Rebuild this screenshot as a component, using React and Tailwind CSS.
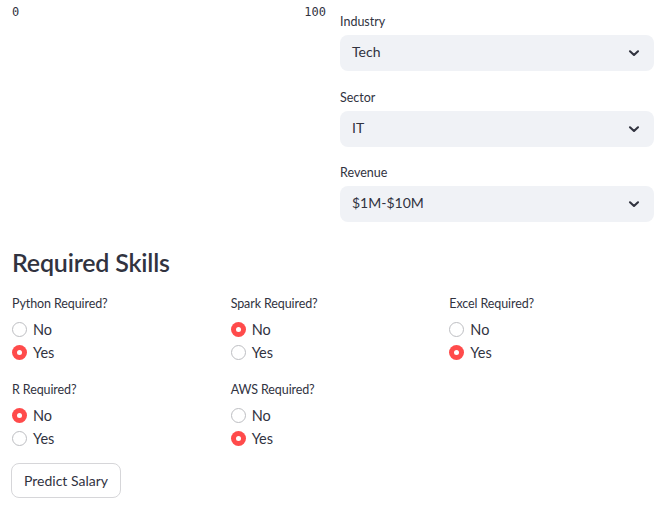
import React from "react";

const skills = [
  { label: "Python Required?", value: "Yes" },
  { label: "Spark Required?", value: "No" },
  { label: "Excel Required?", value: "Yes" },
  { label: "R Required?", value: "No" },
  { label: "AWS Required?", value: "Yes" },
];

const selects = [
  { label: "Industry", value: "Tech" },
  { label: "Sector", value: "IT" },
  { label: "Revenue", value: "$1M-$10M" },
];

const Chevron = () => (
  <svg width="16" height="16" viewBox="0 0 24 24" fill="none" stroke="#31333f" strokeWidth="3.2" strokeLinecap="round" strokeLinejoin="round">
    <path d="M6 9.5l6 5.5 6-5.5" />
  </svg>
);

const Radio = ({ checked, label }) => (
  <div className="flex items-center h-[23px]">
    {checked ? (
      <span className="w-[15px] h-[15px] rounded-full bg-[#ff4b4b] flex items-center justify-center">
        <span className="w-[5px] h-[5px] rounded-full bg-white" />
      </span>
    ) : (
      <span className="w-[15px] h-[15px] rounded-full border border-[#bdbec2] bg-white" />
    )}
    <span className="ml-[6px] text-[14.5px] text-[#31333f]">{label}</span>
  </div>
);

const SkillGroup = ({ label, value }) => (
  <div className="flex flex-col">
    <div className="text-[12.5px] tracking-[-0.1px] text-[#31333f] h-[20px] leading-[20px]">{label}</div>
    <div className="mt-[4px] flex flex-col">
      <Radio label="No" checked={value === "No"} />
      <Radio label="Yes" checked={value === "Yes"} />
    </div>
  </div>
);

export default function App() {
  return (
    <div className="w-[654px] h-[512px] bg-white overflow-hidden pl-3 font-['Lato',sans-serif] text-[#31333f]">
      <div className="grid grid-cols-2 gap-[14px]">
        <div className="flex justify-between font-['DejaVu_Sans_Mono',monospace] text-[12px] text-[#31333f] pt-[4px] leading-[16px]">
          <span>0</span>
          <span>100</span>
        </div>
        <div className="flex flex-col gap-[15.5px] pt-[11px]">
          {selects.map((s) => (
            <div key={s.label} className="flex flex-col">
              <div className="text-[12.5px] h-[20px] leading-[21px]">{s.label}</div>
              <div className="mt-[4px] h-[36px] rounded-lg bg-[#f0f2f6] flex items-center justify-between pl-3 pr-[12px]">
                <span className="text-[14px] leading-[20px] -mt-[2px]">{s.value}</span>
                <Chevron />
              </div>
            </div>
          ))}
        </div>
      </div>

      <h3 className="mt-[22px] text-[25px] font-semibold leading-[36px] tracking-[-0.2px]">Required Skills</h3>

      <div className="mt-[14px] grid grid-cols-3 gap-x-[14px] gap-y-[16px]">
        {skills.map((s) => (
          <SkillGroup key={s.label} {...s} />
        ))}
      </div>

      <button className="mt-[13px] -ml-px h-[35px] px-[12px] rounded-lg border border-[#d6d6d9] bg-white text-[14px] text-[#31333f]">
        Predict Salary
      </button>
    </div>
  );
}
